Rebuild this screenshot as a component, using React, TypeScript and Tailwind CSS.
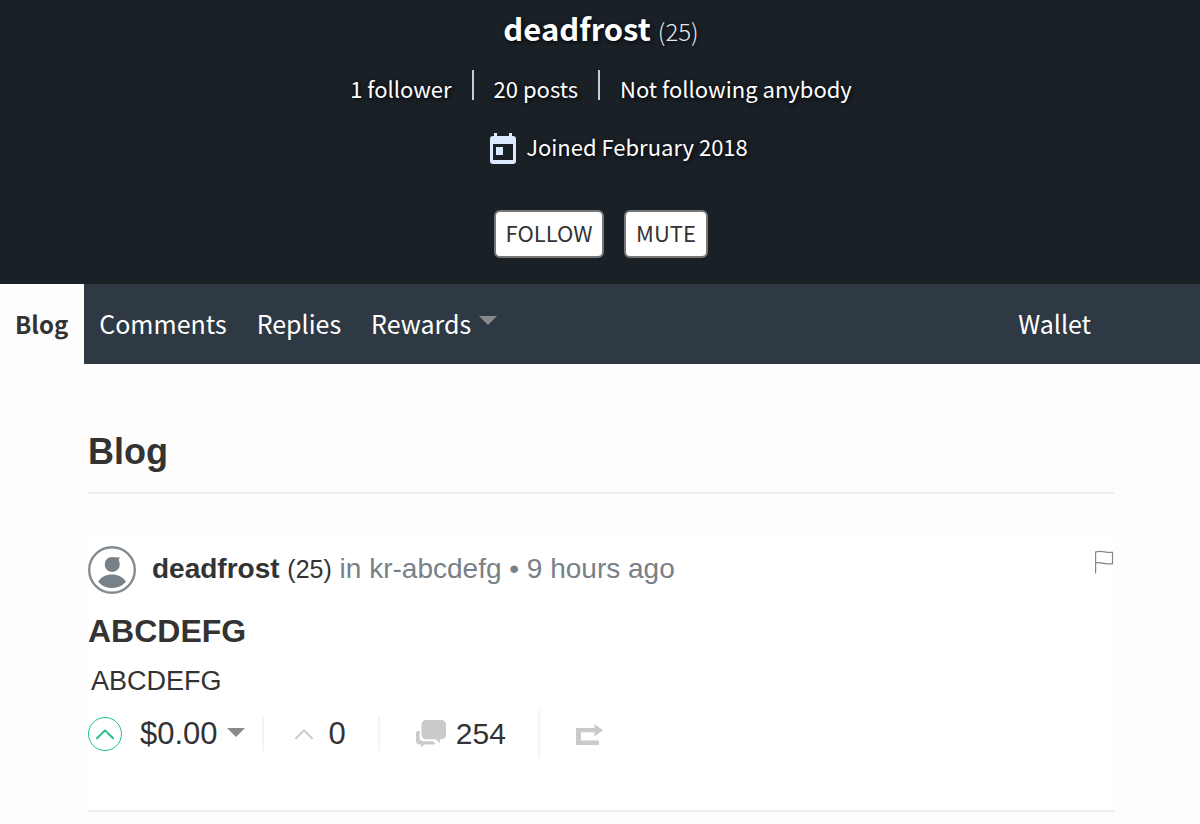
import React from 'react';

const UpvoteChevron: React.FC = () => (
  <svg width="20" height="12" viewBox="0 0 20 12" fill="none" stroke="currentColor" strokeWidth="2" strokeLinecap="round">
    <path d="M2 10.2 10 2.4l8 7.8" strokeLinejoin="round" />
  </svg>
);

const Caret: React.FC = () => (
  <svg width="18" height="9" viewBox="0 0 18 9" fill="#8a8a8a">
    <path d="M0 0h18L9 9z" />
  </svg>
);

const CalendarIcon: React.FC = () => (
  <svg width="26" height="31" viewBox="0 0 26 31" fill="#dbebff">
    <path
      fillRule="evenodd"
      d="M4 0h3v3h12V0h3v3h1a3 3 0 0 1 3 3v22a3 3 0 0 1-3 3H3a3 3 0 0 1-3-3V6a3 3 0 0 1 3-3h1zM3 11v16h20V11z"
    />
    <path d="M6 14h7v8H6z" />
  </svg>
);

const Avatar: React.FC = () => (
  <svg width="48" height="48" viewBox="0 0 48 48" fill="#788187">
    <circle cx="24" cy="24" r="22.8" fill="#fff" stroke="#848c92" strokeWidth="2.4" />
    <path d="M24 11c3 0 5.500.9 8.300.3-.5 1-1.400 1.700-1.600 2.500.7 1.500 1 3.200 1 4.700 0 4.200-3.300 7.400-7.500 7.400s-7.400-3.200-7.400-7.400c0-4.200 3-7.500 7.200-7.500z" />
    <path d="M10.300 35.500c2.800-4.300 8-6.900 13.700-6.900s10.900 2.600 13.900 6.900c-3 4.200-8.200 6.500-13.900 6.500s-10.700-2.300-13.700-6.500z" />
  </svg>
);

const FlagIcon: React.FC = () => (
  <svg width="20" height="24" viewBox="0 0 20 24" fill="none" stroke="#858585" strokeWidth="1.200">
    <path d="M1.600 23.500V2c6-2 10 1.200 16.900.3v11.500c-6 1-11-2-16.900-.9" />
  </svg>
);

const CommentsIcon: React.FC = () => (
  <svg width="30" height="28" viewBox="0 0 30 28" fill="#cacaca">
    <path d="M10 0h15.500A4.500 4.500 0 0 1 30 4.500v10.200a4.500 4.500 0 0 1-4.500 4.500H24v4l-4.500-4H10a4.500 4.500 0 0 1-4.500-4.500V4.500A4.500 4.500 0 0 1 10 0z" />
    <path d="M3.700 10.500v6.700a4 4 0 0 0 4 4H17l2.300 2.100c-.6.900-1.500 1.300-2.800 1.300H8.300L5 27.700v-3.200H4a4 4 0 0 1-4-4V13c0-1.500 1.500-2.500 3.700-2.500z" />
  </svg>
);

const ResteemIcon: React.FC = () => (
  <svg width="27" height="22" viewBox="0 0 27 22" fill="#cacaca">
    <path d="M0 4h18.500V0L27 6.300 18.500 12.500V8.300H5v8.200h18V21H0z" />
  </svg>
);

const tabs = ['Comments', 'Replies', 'Rewards'];

const ProfileHeader: React.FC = () => (
  <header className="flex flex-col items-center bg-[#192026] pb-[26px] pl-0.5 text-[22px] leading-8 text-white [text-shadow:1px_1px_4px_#000]">
    <h1 className="text-[31px] leading-[56px] font-bold">
      deadfrost <span className="text-2xl font-light text-gray-200">(25)</span>
    </h1>
    <ul className="mt-[14px] flex">
      <li className="flex pr-5"><a href="#followers" className="pt-0.5">1 follower</a></li>
      <li className="flex pr-5"><span className="mr-5 h-[30px] w-0.5 bg-[#cccccc]" /><a href="#posts" className="pt-0.5">20 posts</a></li>
      <li className="flex"><span className="mr-5 h-[30px] w-0.5 bg-[#cccccc]" /><a href="#followed" className="pt-0.5">Not following anybody</a></li>
    </ul>
    <div className="mt-[26px] flex gap-[10px] pl-9">
      <span className="pt-[3px]"><CalendarIcon /></span>
      <p>Joined February 2018</p>
    </div>
    <div className="mt-[46px] flex gap-5 text-[#333] [text-shadow:none]">
      <button type="button" className="h-12 w-[110px] rounded-md border-2 border-[#777] bg-white pb-1">FOLLOW</button>
      <button type="button" className="h-12 w-[84px] rounded-md border-2 border-[#777] bg-white pb-1">MUTE</button>
    </div>
  </header>
);

const ProfileNav: React.FC = () => (
  <nav className="flex h-20 items-stretch bg-[#2e3944] text-[25px] text-white">
    <a href="#blog" className="flex items-center bg-[#fdfdfd] pr-4 pl-[15px] text-2xl font-bold text-[#333]">Blog</a>
    {tabs.map((tab) => (
      <a key={tab} href={`#${tab.toLowerCase()}`} className="flex items-center gap-2 px-[15px]">
        {tab}
        {tab === 'Rewards' && <span className="pb-2"><Caret /></span>}
      </a>
    ))}
    <a href="#wallet" className="mr-[94px] ml-auto flex items-center px-[15px]">Wallet</a>
  </nav>
);

const PostSummary: React.FC = () => (
  <article className="mt-10 border-b-2 border-[#eeeeee] bg-white pt-3 pb-[52px]">
    <div className="flex items-start">
      <Avatar />
      <p className="ml-4 text-[28px] leading-[46px] text-[#788187]">
        <a href="#author" className="text-[#333]">
          <strong>deadfrost</strong> <span className="text-[25px]">(25)</span>
        </a>{' '}
        in <a href="#category">kr-abcdefg</a> • <a href="#post">9 hours ago</a>
      </p>
      <button type="button" aria-label="Flag" className="mt-1 ml-auto"><FlagIcon /></button>
    </div>
    <h2 className="mt-[15px] text-[32px] leading-[44px] font-bold"><a href="#post">ABCDEFG</a></h2>
    <p className="mt-2 pl-[3px] text-[27px] leading-[40px]"><a href="#post">ABCDEFG</a></p>
    <div className="mt-[9px] flex h-12 items-center text-[31px] leading-9">
      <button type="button" aria-label="Upvote" className="flex size-[34px] items-center justify-center rounded-full border border-[#1fbf8f] text-[#1fbf8f]">
        <UpvoteChevron />
      </button>
      <button type="button" className="ml-[18px] flex items-center gap-[9px]">
        $0.00
        <span className="pb-1"><Caret /></span>
      </button>
      <div className="ml-[17px] flex h-[34px] items-center gap-[15px] border-x-2 border-[#f4f4f4] pr-8 pl-[30px]">
        <span className="text-[#cacaca]"><UpvoteChevron /></span>
        0
      </div>
      <a href="#comments" className="flex h-12 items-center gap-[10px] border-r-2 border-[#f4f4f4] pr-8 pl-9 text-3xl">
        <CommentsIcon />
        254
      </a>
      <button type="button" aria-label="Resteem" className="mt-0.5 ml-9"><ResteemIcon /></button>
    </div>
  </article>
);

export default function App() {
  return (
    <div className="min-h-screen bg-[#fdfdfd] font-['Noto_Sans_CJK_SC',sans-serif] text-[#333]">
      <ProfileHeader />
      <ProfileNav />
      <main className="pr-[86px] pl-[88px] font-['Liberation_Sans',sans-serif]">
        <h1 className="border-b-2 border-[#eeeeee] pt-16 pb-4 text-4xl leading-[48px] font-bold">Blog</h1>
        <PostSummary />
      </main>
    </div>
  );
}
